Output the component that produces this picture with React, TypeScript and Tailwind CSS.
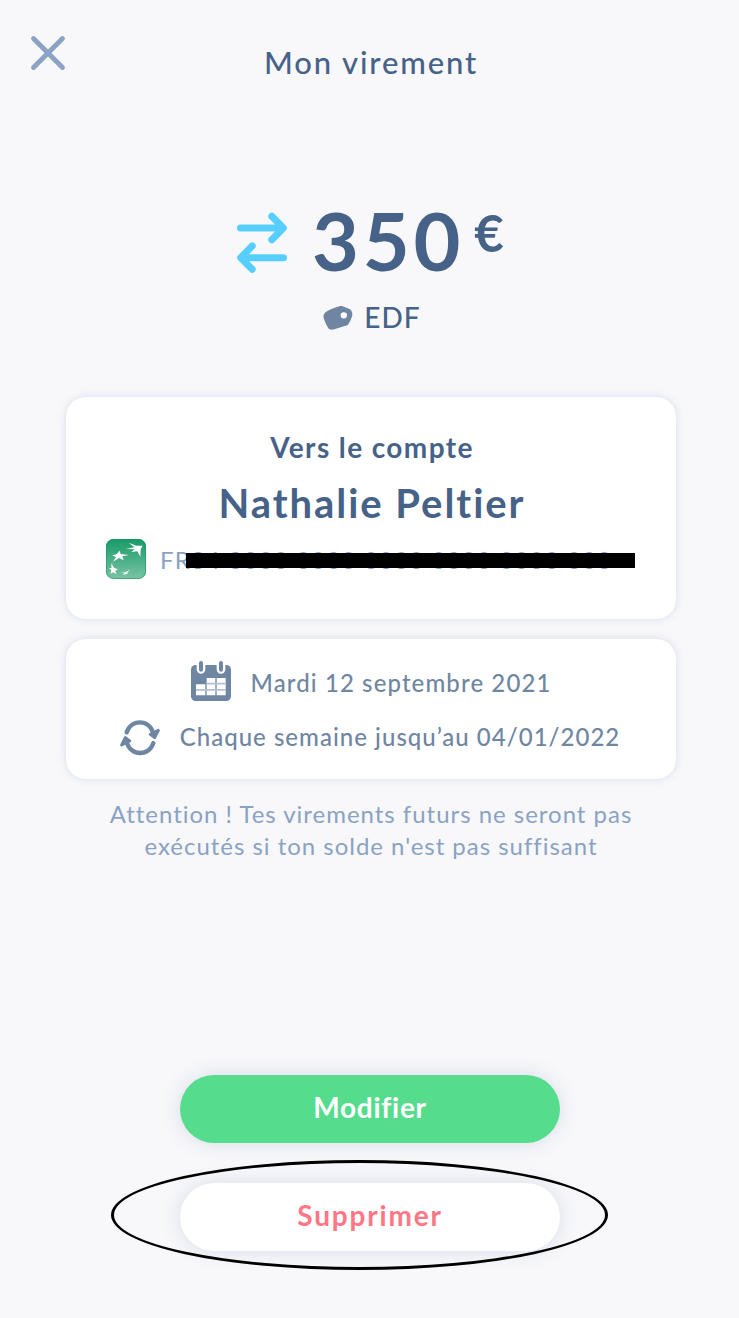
import type { ReactNode } from 'react'

function CloseIcon() {
  return (
    <svg width="36" height="36" viewBox="0 0 36 36" fill="none" stroke="#8aa2c3" strokeWidth="4.8" strokeLinecap="round">
      <path d="M3.5 3.5 32.5 32.5M32.5 3.5 3.5 32.5" />
    </svg>
  )
}

function TransferIcon() {
  return (
    <svg width="50" height="62" viewBox="0 0 50 62" fill="none" stroke="#56cfff" strokeWidth="7" strokeLinecap="round" strokeLinejoin="round">
      <path d="M3.5 16H45.5M34.8 4.3 46.3 16 34.8 27.8" />
      <path d="M46.5 45.7H4.5M15.2 34 3.7 45.7 15.2 57.3" />
    </svg>
  )
}

function TagIcon() {
  return (
    <svg width="30" height="26" viewBox="0 0 90 78">
      <path
        d="M2 41C0 32 4 27 12 22C22 16 37 11 49 7C54 5 58 6 63 8L80 15C85 18 88 24 88 32C88 38 81 52 77 59C75 63 70 65 65 66L34 76C25 79 17 77 14 69C9 61 5 51 2 41Z"
        fill="#6f86a3"
      />
      <circle cx="62.5" cy="34" r="9.5" fill="#fff" />
    </svg>
  )
}

function BankLogo() {
  return (
    <svg width="40" height="40" viewBox="0 0 120 120" className="shrink-0">
      <defs>
        <linearGradient id="bank" x1="0" y1="0" x2="0" y2="1">
          <stop offset="0" stopColor="#169a69" />
          <stop offset="1" stopColor="#7ac4a2" />
        </linearGradient>
      </defs>
      <rect width="120" height="120" rx="22" fill="url(#bank)" />
      <rect x="1.5" y="1.5" width="117" height="117" rx="21" fill="none" stroke="#1f8f62" strokeWidth="3" opacity=".55" />
      <g fill="#fff">
        <path d="M68 11 91 20 110 20 104 31 103 53 94 37 76 39 86 31 60 30 85 25Z" />
        <path d="M18 49 32 46 41 35 44 45 69 48 49 52 53 64 39 57 21 68 30 55Z" />
        <path d="M19 70C17 77 20 81 24 86L36 91 28 95 31 106 22 100 13 104 16 94 9 87 17 87C15 81 16 75 19 70Z" />
        <path d="M45 101 58 100 71 92 64 101 65 104 50 108 56 103Z" />
      </g>
    </svg>
  )
}

function CalendarIcon() {
  return (
    <svg width="40" height="40" viewBox="0 0 120 120" className="shrink-0">
      <rect y="12" width="120" height="108" rx="14" fill="#6f86a3" />
      <path d="M30 5V25M90 5V25" stroke="#fff" strokeWidth="26" strokeLinecap="round" />
      <path d="M30 6V26M90 6V26" stroke="#6f86a3" strokeWidth="12" strokeLinecap="round" />
      <path d="M15 70H43V103H15ZM47 51H73V103H47ZM77 51H104V103H77Z" fill="#fff" />
      <path d="M47 68H104M15 86.5H104" stroke="#b5c1cf" strokeWidth="5" />
    </svg>
  )
}

function RepeatIcon() {
  return (
    <svg width="40" height="36" viewBox="0 0 120 108" fill="none" stroke="#6f86a3" strokeLinejoin="round" strokeLinecap="round" className="shrink-0">
      <path d="M20 37A41 41 0 0 1 99 37M100 69A41 41 0 0 1 21 69" strokeWidth="13" />
      <path d="M91 43 115 31 104 53ZM29 63 5 75 16 53Z" fill="#6f86a3" strokeWidth="9" />
    </svg>
  )
}

function Card({ className, children }: { className: string; children: ReactNode }) {
  return (
    <section className={`flex w-[610px] flex-col items-center rounded-[20px] bg-white shadow-[0_0_8px_rgba(70,98,136,0.18)] ${className}`}>
      {children}
    </section>
  )
}

export default function App() {
  return (
    <div className="flex h-[1318px] w-[739px] flex-col overflow-hidden bg-[#f8f8fb] font-['Lato','Noto_Sans',sans-serif] whitespace-nowrap text-[#466288]">
      <header className="grid h-[125px] grid-cols-[60px_1fr_60px] pr-[27px] pl-[30px]">
        <button className="h-9 w-9 pt-[35px]" aria-label="Fermer">
          <CloseIcon />
        </button>
        <h1 className="pt-[42px] text-center text-[31px] leading-10 font-medium tracking-[1.85px]">Mon virement</h1>
      </header>

      <div className="flex h-[170px] pt-[74px] pl-[237px]">
        <div className="pt-[13px]">
          <TransferIcon />
        </div>
        <span className="ml-[25px] text-[81px] leading-[82px] font-bold tracking-[3.8px]">350</span>
        <span className="ml-[10px] pt-[6px] text-[51px] leading-[56px] font-bold">€</span>
      </div>

      <div className="flex h-[102px] justify-center gap-[11px] pt-[2px] pl-[5px]">
        <div className="pt-[7px]">
          <TagIcon />
        </div>
        <span className="text-[28px] leading-10 font-medium tracking-[1px]">EDF</span>
      </div>

      <main className="flex flex-col gap-5 pl-[66px]">
        <Card className="h-[222px] pt-[30px]">
          <h2 className="pl-[2px] text-[28px] leading-10 font-bold tracking-[1.4px]">Vers le compte</h2>
          <p className="mt-[9px] pl-[2px] text-[40px] leading-[54px] font-bold tracking-[1.95px]">Nathalie Peltier</p>
          <div className="mt-[9px] flex w-[530px] gap-[14px]">
            <BankLogo />
            <div className="relative text-[24px] leading-[42px] tracking-[1.18px] text-[#8aa2c3]">
              FR34 0000 0000 0000 0000 0000 000
              <div className="absolute top-[14px] left-[26px] h-[15px] w-[449px] bg-black" />
            </div>
          </div>
        </Card>

        <Card className="h-[140px] pt-[22px] text-[24px] leading-[44px] font-medium text-[#6f86a3]">
          <div className="flex h-[54px] gap-5">
            <CalendarIcon />
            <span className="tracking-[1.1px]">Mardi 12 septembre 2021</span>
          </div>
          <div className="flex gap-5 pr-[2px]">
            <div className="pt-[5px]">
              <RepeatIcon />
            </div>
            <span className="tracking-[1.02px]">Chaque semaine jusqu’au 04/01/2022</span>
          </div>
        </Card>

        <p className="-mt-px w-[610px] text-center text-[24px] leading-8 tracking-[0.98px] text-[#8aa2c3]">
          Attention ! Tes virements futurs ne seront pas
          <br />
          exécutés si ton solde n'est pas suffisant
        </p>
      </main>

      <footer className="mt-auto flex flex-col gap-10 pb-[67px] pl-[180px]">
        <button className="h-[68px] w-[380px] rounded-full bg-[#55dc8d] pb-[5px] text-[28px] font-bold tracking-[0.75px] text-white shadow-[0_0_20px_rgba(70,98,136,0.18)]">
          Modifier
        </button>
        <div className="relative h-[68px] w-[380px]">
          <button className="h-[68px] w-[380px] rounded-full bg-white pb-[5px] text-[28px] font-bold tracking-[1.8px] text-[#ff7685] shadow-[0_0_20px_rgba(70,98,136,0.18)]">
            Supprimer
          </button>
          <div className="pointer-events-none absolute top-[-23px] left-[-69px] h-[110px] w-[497px] rounded-[50%] border-[3px] border-black" />
        </div>
      </footer>
    </div>
  )
}
